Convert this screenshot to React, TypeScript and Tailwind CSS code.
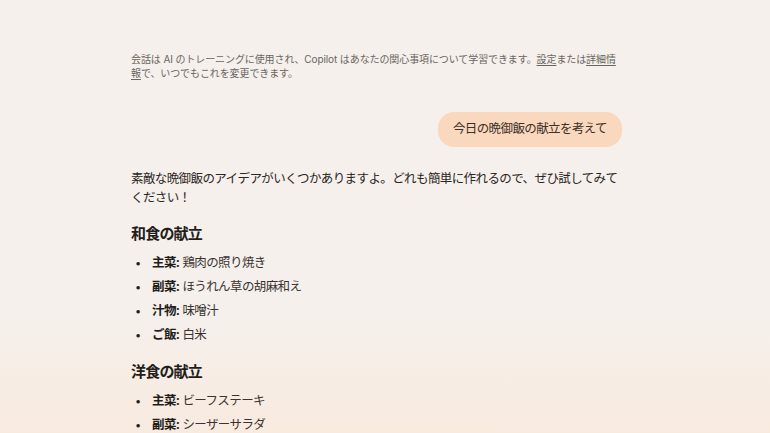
const jp = "font-['Inter','Noto_Sans_CJK_JP',sans-serif]";

const menus = [
  {
    title: "和食の献立",
    items: [
      { label: "主菜", text: "鶏肉の照り焼き" },
      { label: "副菜", text: "ほうれん草の胡麻和え" },
      { label: "汁物", text: "味噌汁" },
      { label: "ご飯", text: "白米" },
    ],
  },
  {
    title: "洋食の献立",
    items: [
      { label: "主菜", text: "ビーフステーキ" },
      { label: "副菜", text: "シーザーサラダ" },
    ],
  },
];

export default function App() {
  return (
    <div
      className={`h-[433px] overflow-hidden bg-gradient-to-b from-[#f5f0ec] from-[72%] to-[#f8eadf] ${jp}`}
    >
      <div className="pl-[131px] pt-[52px] w-[622px]">
        {/* Disclaimer */}
        <p className="text-[10px] leading-[14px] tracking-[-0.1px] text-[#6b6560]">
          会話は AI のトレーニングに使用され、Copilot はあなたの関心事項について学習できます。
          <span className="underline underline-offset-2">設定</span>または
          <span className="underline underline-offset-2">詳細情報</span>で、いつでもこれを変更できます。
        </p>

        {/* User message */}
        <div className="flex justify-end mt-[32px]">
          <div className="h-[35px] px-[15px] flex items-center rounded-[16px] bg-[#f9d8be] text-[12.5px] tracking-[-0.6px] text-[#3b2f29]">
            今日の晩御飯の献立を考えて
          </div>
        </div>

        {/* Reply */}
        <div className="mt-[22px] text-[#2b2522]">
          <p className="text-[12.5px] leading-[19px] tracking-[-0.6px]">
            素敵な晩御飯のアイデアがいくつかありますよ。どれも簡単に作れるので、ぜひ試してみてください！
          </p>

          {menus.map((m, i) => (
            <div key={m.title} className={i === 0 ? "mt-[16px]" : "mt-[14px]"}>
              <h3 className="text-[15px] leading-[22px] tracking-[-0.8px] font-bold text-[#231d1a]">
                {m.title}
              </h3>
              <ul className="mt-[6px]">
                {m.items.map((it) => (
                  <li
                    key={it.label}
                    className="flex items-center h-[24px] text-[12.5px] tracking-[-0.6px] text-[#3a3330]"
                  >
                    <span className="w-[21px] pl-[4px] text-[11px] text-[#231d1a]">•</span>
                    <span className="font-bold text-[#231d1a]">{it.label}:</span>
                    <span className="ml-[3px]">{it.text}</span>
                  </li>
                ))}
              </ul>
            </div>
          ))}
        </div>
      </div>
    </div>
  );
}
